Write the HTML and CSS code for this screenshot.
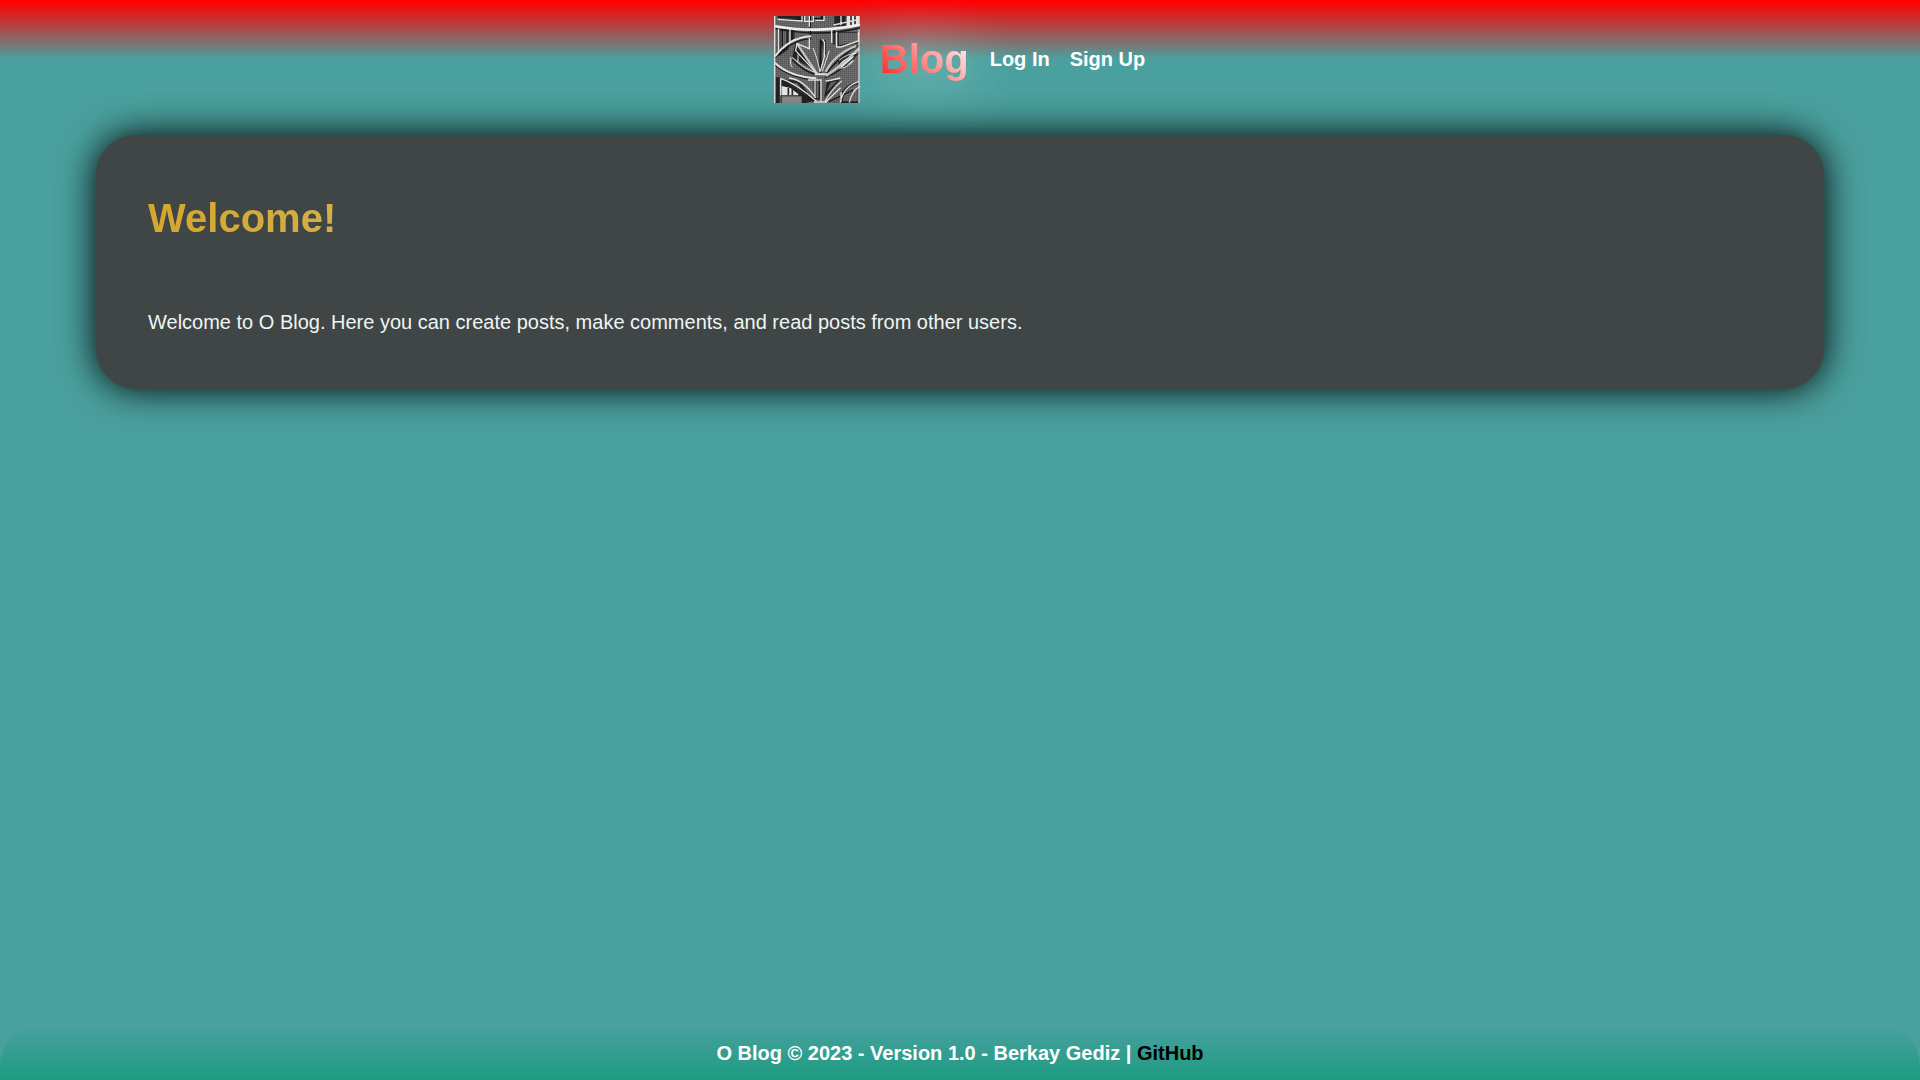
FILE: index.html
```html
<!DOCTYPE html>
<html lang="en">
<head>
<meta charset="utf-8">
<title>O Blog</title>
<link rel="stylesheet" href="styles.css">
</head>
<body>
<header class="header">
  <svg class="logo" viewBox="15 18 258 261" preserveAspectRatio="none" fill="none" aria-label="O">
    <defs>
      <pattern id="weave" width="6" height="6" patternUnits="userSpaceOnUse">
        <rect width="6" height="6" fill="#5c5a5c"/>
        <path d="M0 1.5H6M1.5 0V6" stroke="#747274" stroke-width="1.5"/>
        <path d="M4 4h2" stroke="#444" stroke-width="2"/>
      </pattern>
    </defs>
    <rect x="15" y="18" width="258" height="261" fill="url(#weave)"/>
    <!-- recesses -->
    <g fill="#222">
      <path d="M28 58H58V118L30 138ZM63 60H76V92L64 102ZM26 18H100V28L26 24ZM155 18H165V30H155ZM196 18H230V48H196ZM80 96L140 182 70 142Z"/>
      <path d="M152 90H170V130L150 186ZM204 66H270V100L204 112ZM210 146Q235 126 262 130L256 148Q230 178 208 172ZM20 202H32V279H20ZM36 208L90 212 135 272 110 279H36ZM136 208H154V268H136ZM174 210H212L166 264ZM218 246Q235 220 270 212V279H216Z"/>
    </g>
    <g fill="url(#weave)">
      <path d="M84 102L128 124V168ZM158 100L166 136 157 158ZM210 68H266V94L210 106ZM225 250Q240 230 266 222V274H222ZM142 212H149V264H142ZM184 218L205 212 173 246ZM60 218L84 218 116 260ZM34 62H52V112L34 126Z"/>
    </g>
    <path d="M234 18H272V40L234 52ZM38 228L64 234 88 252V256H38ZM212 162Q230 140 258 138L248 158 216 174Z" fill="#e4e4e4"/>
    <path d="M58 234V256M70 238V256M246 18V48M258 18V44" stroke="#292929" stroke-width="5"/>
    <path d="M38 259H98V279H38Z" fill="#888"/>
    <!-- dark undersides of the ribs -->
    <g stroke="#171717" stroke-width="4">
      <path d="M15 55Q75 68 140 69T273 54M18 144Q70 88 126 86M273 104Q215 134 170 192M18 164Q58 202 142 210M273 124Q220 184 168 203M82 119L142 190M70 149Q108 187 146 195M42 210Q88 228 134 275M216 214Q180 248 166 278M252 240L180 275"/>
      <path d="M124 18V88M195 58V104M204 64V111M155 88V190M40 62V124M65 60V96M130 26H160V18M28 28H102V18M136 208V274"/>
    </g>
    <!-- light edges -->
    <g stroke="#e2e2e0">
      <path stroke-width="8" stroke="#efefed" d="M15 48Q75 60 145 59T273 44"/>
      <path stroke-width="6" d="M18 139Q62 82 126 79M18 159Q62 200 142 205M137 193H175"/>
      <path stroke-width="7" stroke="#c4c4c4" d="M270 116Q228 158 171 198M170 186Q196 132 262 108M84 101L143 190"/>
      <path stroke-width="4" d="M29 56V126M63 58V98L77 88M121 18V50M121 84V116L84 101 80 122 143 190M160 88L166 96V140L154 184M188 58V98M203 65V111H216L268 93V66M235 22V48M107 18V34H133V18M165 18V31H139M26 28L99 33V18M216 18V46M194 45L270 28"/>
      <path stroke-width="3" d="M70 142Q103 176 146 190M65 142V164L70 172M87 133V158M210 151Q235 131 262 130M209 174Q230 178 256 151M132 114Q144 140 153 186M181 122L160 184"/>
      <path stroke-width="4" d="M34 205Q82 220 142 274M60 204Q106 210 140 264M117 210H156V276M138 210V264M218 213Q187 238 166 278M214 204Q180 213 170 213M215 233L171 275M214 278Q222 230 270 214M241 278Q248 243 273 228M35 207V256M216 275V246M134 276H174"/>
    </g>
    <path d="M17 18V279M270 58V279" stroke="#ddd" stroke-width="4"/>
  </svg>
  <span class="brand">Blog</span>
  <nav class="nav">
    <a class="nav-link">Log In</a>
    <a class="nav-link">Sign Up</a>
  </nav>
</header>
<main class="card">
  <h1 class="title">Welcome!</h1>
  <p class="intro">Welcome to O Blog. Here you can create posts, make comments, and read posts from other users.</p>
</main>
<footer class="footer">O Blog © 2023 - Version 1.0 - Berkay Gediz |&nbsp;<a class="github">GitHub</a></footer>
</body>
</html>
```
FILE: styles.css
```css
* { box-sizing: border-box; }
body {
  margin: 0;
  height: 100vh;
  display: flex;
  flex-direction: column;
  overflow: hidden;
  background: #4aa09e;
  color: #fff;
  font-family: "Liberation Sans", Arial, sans-serif;
  font-size: 20px;
}
.header {
  height: 119px;
  flex: none;
  display: flex;
  justify-content: center;
  align-items: center;
  background: linear-gradient(#f00 0, #f00 2px, #4aa09e 59px);
}
.logo { width: 86px; height: 87px; margin-right: 20px; }
.brand {
  font-size: 40px;
  font-weight: bold;
  color: transparent;
  background: linear-gradient(45deg, #f33 10%, #fff);
  -webkit-background-clip: text;
  background-clip: text;
  filter: drop-shadow(0 0 30px rgba(255, 255, 255, .75));
}
.nav { display: flex; gap: 20px; margin: 0 1px 0 21px; font-weight: bold; }
.card {
  width: 90%;
  height: 254px;
  flex: none;
  margin: 16px auto 0;
  padding: 60px 52px 0;
  border-radius: 40px;
  background: #404545;
  box-shadow: 0 0 37px #000;
}
.title {
  margin: 0;
  font-size: 40px;
  line-height: 46px;
  color: transparent;
  background: linear-gradient(90deg, #d4a72c, #d4af4a 200px);
  -webkit-background-clip: text;
  background-clip: text;
}
.intro { margin: 70px 0 0; line-height: 23px; color: #eef5f4; }
.footer {
  height: 55px;
  flex: none;
  margin-top: auto;
  padding-top: 1px;
  display: flex;
  justify-content: center;
  align-items: center;
  border-radius: 40px 40px 0 0;
  background: linear-gradient(#4aa09e, #1c9c82);
  font-weight: bold;
}
.github { color: #000; }
```
